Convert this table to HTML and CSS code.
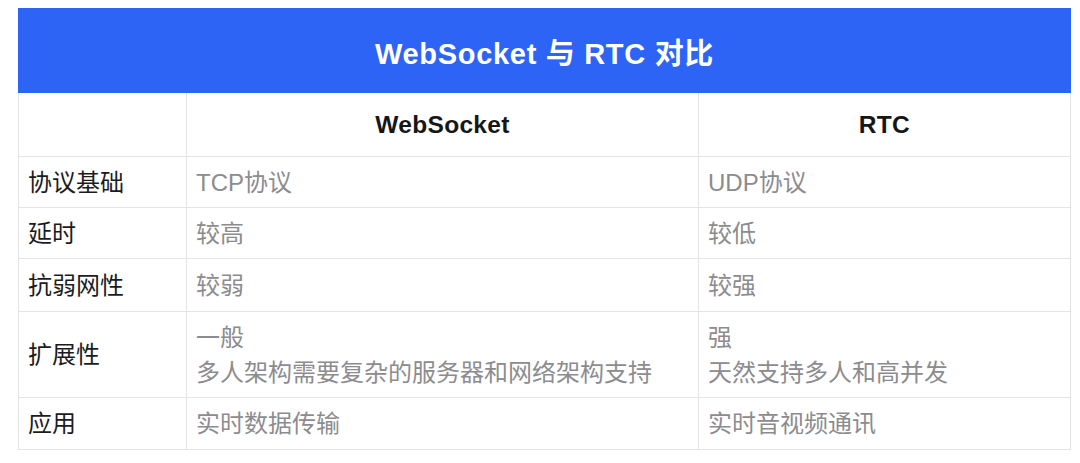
FILE: index.html
```html
<!DOCTYPE html>
<html lang="zh">
<head>
<meta charset="utf-8">
<link rel="stylesheet" href="styles.css">
</head>
<body>
<table class="cmp">
  <colgroup>
    <col class="c-label">
    <col class="c-ws">
    <col class="c-rtc">
  </colgroup>
  <thead>
    <tr class="r-title"><th colspan="3">WebSocket 与 RTC 对比</th></tr>
    <tr class="r-head"><th></th><th>WebSocket</th><th>RTC</th></tr>
  </thead>
  <tbody>
    <tr class="r-1"><td class="lbl">协议基础</td><td>TCP协议</td><td>UDP协议</td></tr>
    <tr class="r-2"><td class="lbl">延时</td><td>较高</td><td>较低</td></tr>
    <tr class="r-3"><td class="lbl">抗弱网性</td><td>较弱</td><td>较强</td></tr>
    <tr class="r-4"><td class="lbl">扩展性</td><td>一般<br>多人架构需要复杂的服务器和网络架构支持</td><td>强<br>天然支持多人和高并发</td></tr>
    <tr class="r-5"><td class="lbl">应用</td><td>实时数据传输</td><td>实时音视频通讯</td></tr>
  </tbody>
</table>
</body>
</html>
```

FILE: styles.css
```css
html, body {
  margin: 0;
  padding: 0;
  background: #ffffff;
}
body {
  padding: 8px 0 0 18px;
  font-family: "Liberation Sans", "Noto Sans CJK SC", sans-serif;
}
.cmp {
  border-collapse: collapse;
  table-layout: fixed;
  width: 1052px;
}
.c-label { width: 168px; }
.c-ws { width: 512px; }
.c-rtc { width: 372px; }

.cmp th, .cmp td {
  border: 1px solid #e4e4e6;
  padding: 0;
  vertical-align: middle;
}
.r-title th {
  background: #2e64f6;
  border-color: #2e64f6;
  color: #ffffff;
  height: 83px;
  font-size: 29px;
  font-weight: bold;
  text-align: center;
  letter-spacing: 0.7px;
}
.r-head th {
  height: 63px;
  font-size: 24.5px;
  font-weight: bold;
  color: #161616;
  text-align: center;
  letter-spacing: 0.3px;
}
.cmp td {
  font-size: 24px;
  color: #8c8c8e;
  padding-left: 9px;
  line-height: 35px;
}
.cmp td.lbl {
  color: #1c1c1c;
}
.r-1 td, .r-2 td { height: 50px; }
.r-3 td { height: 52px; }
.r-4 td { height: 85px; }
.r-5 td { height: 51px; }
```
